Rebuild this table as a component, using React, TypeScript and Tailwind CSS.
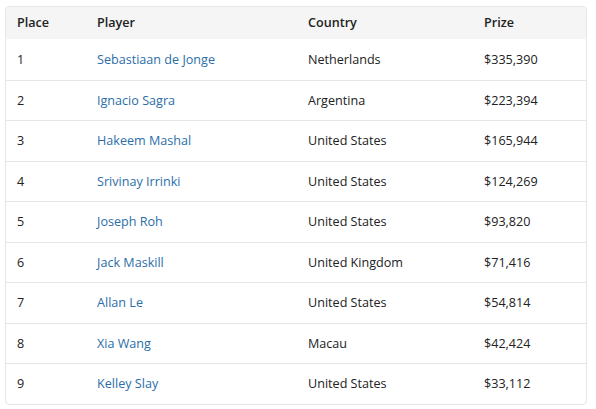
import React from "react";

const rows = [
  ["1", "Sebastiaan de Jonge", "Netherlands", "$335,390"],
  ["2", "Ignacio Sagra", "Argentina", "$223,394"],
  ["3", "Hakeem Mashal", "United States", "$165,944"],
  ["4", "Srivinay Irrinki", "United States", "$124,269"],
  ["5", "Joseph Roh", "United States", "$93,820"],
  ["6", "Jack Maskill", "United Kingdom", "$71,416"],
  ["7", "Allan Le", "United States", "$54,814"],
  ["8", "Xia Wang", "Macau", "$42,424"],
  ["9", "Kelley Slay", "United States", "$33,112"],
];

export default function App() {
  return (
    <div className="w-[596px] h-[409px] bg-white pt-[6px] pl-[5px]" style={{ fontFamily: '"Open Sans", sans-serif' }}>
      <div className="w-[582px] border border-[#e6e6e6] rounded-[4px] overflow-hidden text-[12.6px] text-[#222]">
        <div className="flex items-center h-[32px] pt-[1px] bg-[#f5f5f5] font-semibold">
          <div className="w-[80px] pl-[11px]">Place</div>
          <div className="w-[211px] pl-[11px]">Player</div>
          <div className="w-[176px] pl-[11px]">Country</div>
          <div className="flex-1 pl-[11px]">Prize</div>
        </div>
        {rows.map((r, i) => (
          <div key={i} className={`flex items-center h-[40.5px] pt-[2px] ${i > 0 ? "border-t border-[#e6e6e6]" : ""}`}>
            <div className="w-[80px] pl-[11px]">{r[0]}</div>
            <div className="w-[211px] pl-[11px] text-[#2b6ea8]">{r[1]}</div>
            <div className="w-[176px] pl-[11px]">{r[2]}</div>
            <div className="flex-1 pl-[11px]">{r[3]}</div>
          </div>
        ))}
      </div>
    </div>
  );
}
